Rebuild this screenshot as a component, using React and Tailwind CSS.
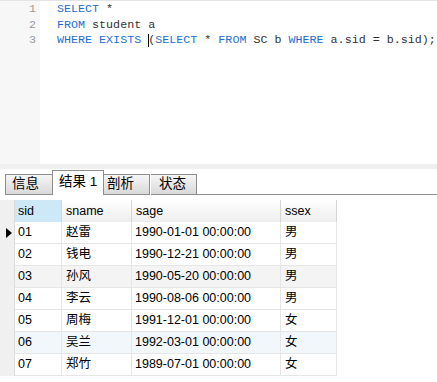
import React from 'react';

const rows = [
  { sid: '01', sname: '赵雷', sage: '1990-01-01 00:00:00', ssex: '男', bg: 'bg-white' },
  { sid: '02', sname: '钱电', sage: '1990-12-21 00:00:00', ssex: '男', bg: 'bg-white' },
  { sid: '03', sname: '孙风', sage: '1990-05-20 00:00:00', ssex: '男', bg: 'bg-[#f4f4f4]' },
  { sid: '04', sname: '李云', sage: '1990-08-06 00:00:00', ssex: '男', bg: 'bg-white' },
  { sid: '05', sname: '周梅', sage: '1991-12-01 00:00:00', ssex: '女', bg: 'bg-white' },
  { sid: '06', sname: '吴兰', sage: '1992-03-01 00:00:00', ssex: '女', bg: 'bg-[#f2f7fc]' },
  { sid: '07', sname: '郑竹', sage: '1989-07-01 00:00:00', ssex: '女', bg: 'bg-white' },
];

const K = ({ children }) => <span className="text-[#1f6fd1]">{children}</span>;

function Editor() {
  return (
    <div className="flex h-[164px] border-t border-[#e4e4e4]">
      <div className="w-[40px] bg-[#f7f7f7] pt-[1px] pr-[4px] text-right text-[#9a9a9a]">
        <div className="h-[15.5px]">1</div>
        <div className="h-[15.5px]">2</div>
        <div className="h-[15.5px]">3</div>
      </div>
      <div className="flex-1 pl-[17px] pt-[1px] text-[#333] whitespace-pre bg-white">
        <div className="h-[15.5px]"><K>SELECT</K> *</div>
        <div className="h-[15.5px]"><K>FROM</K> student a</div>
        <div className="h-[15.5px] flex items-center">
          <span><K>WHERE</K> <K>EXISTS</K> </span>
          <span className="w-px h-[13px] bg-black mr-[-1px]" />
          <span>(<K>SELECT</K> * <K>FROM</K> SC b <K>WHERE</K> a.sid = b.sid);</span>
        </div>
      </div>
    </div>
  );
}

function Tabs() {
  const tab = 'h-[21px] flex items-center border border-[#8e8e8e] bg-gradient-to-b from-[#f6f6f6] to-[#d9d9d9] text-[13.5px] text-black';
  return (
    <div className="h-[31px] flex items-end bg-white border-t-[5px] border-[#f0f0f0] pl-[5px]">
      <div className={`${tab} w-[47px] pl-[6px] border-r-0`}>信息</div>
      <div className="h-[25px] w-[52px] flex items-start pt-[1px] pl-[6px] border border-b-0 border-[#8e8e8e] bg-white text-[13.5px] text-black">结果 1</div>
      <div className={`${tab} w-[46px] pl-[3px] border-l-0`}>剖析</div>
      <div className={`${tab} w-[46px] pl-[8px] border-l-0 ml-[1px]`}>状态</div>
      <div className="flex-1 border-b border-[#8e8e8e]" />
    </div>
  );
}

function Grid() {
  const cols = 'grid grid-cols-[15px_47px_70px_149px_56px] w-[337px]';
  return (
    <div className="bg-white pt-[5px] h-[187px]">
      <div className={`${cols} h-[22px] text-[12.5px] text-black`}>
        <div className="bg-[#f0f0f0] border-r border-[#dcdcdc]" />
        <div className="bg-[#cde9f8] pl-[3px] flex items-center border-r border-[#d5d5d5]">sid</div>
        <div className="bg-gradient-to-b from-white to-[#eeeeee] pl-[4px] flex items-center border-r border-[#d5d5d5]">sname</div>
        <div className="bg-gradient-to-b from-white to-[#eeeeee] pl-[4px] flex items-center border-r border-[#d5d5d5]">sage</div>
        <div className="bg-gradient-to-b from-white to-[#eeeeee] pl-[4px] flex items-center border-r border-[#d5d5d5]">ssex</div>
      </div>
      {rows.map((r, i) => (
        <div key={r.sid} className={`${cols} h-[22px] text-[12.5px] text-black`}>
          <div className="bg-[#f0f0f0] border-r border-[#dcdcdc] flex items-center pl-[6px]">
            {i === 0 && (
              <svg width="6" height="10" viewBox="0 0 6 10"><path d="M0 0 L6 5 L0 10 Z" fill="#000" /></svg>
            )}
          </div>
          <div className={`${r.bg} pl-[3px] flex items-center border-r border-b border-[#e6e6e6]`}>{r.sid}</div>
          <div className={`${r.bg} pl-[4px] flex items-center border-r border-b border-[#e6e6e6]`}>{r.sname}</div>
          <div className={`${r.bg} pl-[3px] flex items-center border-r border-b border-[#e6e6e6]`}>{r.sage}</div>
          <div className={`${r.bg} pl-[4px] flex items-center border-r border-b border-[#e6e6e6]`}>{r.ssex}</div>
        </div>
      ))}
    </div>
  );
}

export default function App() {
  return (
    <div className="w-[437px] h-[382px] bg-white overflow-hidden">
      <div className="font-['Liberation_Mono',monospace] text-[11.7px] leading-[15.5px]">
        <Editor />
      </div>
      <div className="font-['Liberation_Sans','Noto_Sans_CJK_SC',sans-serif]">
        <Tabs />
        <Grid />
      </div>
    </div>
  );
}
